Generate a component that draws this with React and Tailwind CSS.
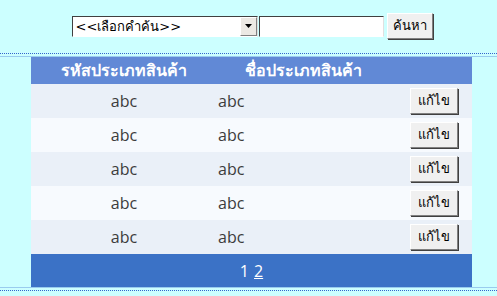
import React from "react";

const rows = [0, 1, 2, 3, 4];

function EditBtn() {
  return (
    <div className="w-[48px] h-[26px] flex items-center justify-center bg-[#f0f0f0] border border-t-[#ffffff] border-l-[#ffffff] border-r-[#808080] border-b-[#808080] shadow-[1px_1px_0_#404040] text-[13px] text-black">
      แก้ไข
    </div>
  );
}

export default function App() {
  return (
    <div
      className="w-[497px] h-[296px] bg-[#ccffff] overflow-hidden"
      style={{ fontFamily: "Tahoma, 'DejaVu Sans', 'Noto Sans', sans-serif" }}
    >
      <div className="h-[54px] border-b border-dotted border-[#3366cc] flex justify-center items-start pt-[13px] pl-[7px]">
        <div className="flex items-center h-[26px]">
          <div className="w-[186px] h-[21px] bg-white border border-t-[#404040] border-l-[#404040] border-r-[#e0e0e0] border-b-[#ffffff] flex items-center">
            <div className="flex-1 pl-[3px] text-[13px] text-black leading-none">&lt;&lt;เลือกคำค้น&gt;&gt;</div>
            <div className="w-[17px] h-[19px] bg-[#ece9e4] border border-t-[#ffffff] border-l-[#ffffff] border-r-[#808080] border-b-[#808080] flex items-center justify-center">
              <svg width="7" height="4" viewBox="0 0 7 4"><path d="M0 0h7L3.5 4z" fill="#000" /></svg>
            </div>
          </div>
          <div className="w-[125px] h-[21px] ml-[1px] bg-white border border-t-[#404040] border-l-[#404040] border-r-[#e0e0e0] border-b-[#ffffff]" />
          <div className="w-[46px] h-[26px] ml-[3px] bg-[#f0f0f0] border border-t-[#ffffff] border-l-[#ffffff] border-r-[#808080] border-b-[#808080] shadow-[1px_1px_0_#404040] flex items-center justify-center text-[13px] text-black">
            ค้นหา
          </div>
        </div>
      </div>
      <div className="mt-[2px] border-t border-b border-[#99ccee]">
        <div className="ml-[31px] w-[441px]">
          <div className="h-[27px] bg-[#6189d6] flex items-center text-white font-bold text-[16px]">
            <div className="w-[186px] text-center">รหัสประเภทสินค้า</div>
            <div className="w-[173px] text-center">ชื่อประเภทสินค้า</div>
            <div className="flex-1" />
          </div>
          {rows.map((r) => (
            <div
              key={r}
              className={`h-[34px] flex items-center text-[16px] text-[#3c3c3c] ${r % 2 === 0 ? "bg-[#eaf0f8]" : "bg-[#f7fafe]"}`}
              style={{ fontFamily: "'Open Sans', 'Noto Sans', sans-serif" }}
            >
              <div className="w-[186px] text-center">abc</div>
              <div className="w-[173px] pl-[1px]">abc</div>
              <div className="flex-1 flex justify-end pr-[14px]" style={{ fontFamily: "Tahoma, 'DejaVu Sans', sans-serif" }}>
                <EditBtn />
              </div>
            </div>
          ))}
          <div className="h-[33px] bg-[#3b72c6] flex items-center justify-center text-white text-[16px] gap-[5px]" style={{ fontFamily: "'Open Sans', 'Noto Sans', sans-serif" }}>
            <span>1</span>
            <span className="underline">2</span>
          </div>
        </div>
      </div>
      <div className="mt-[2px] border-t border-dotted border-[#3366cc]" />
    </div>
  );
}
